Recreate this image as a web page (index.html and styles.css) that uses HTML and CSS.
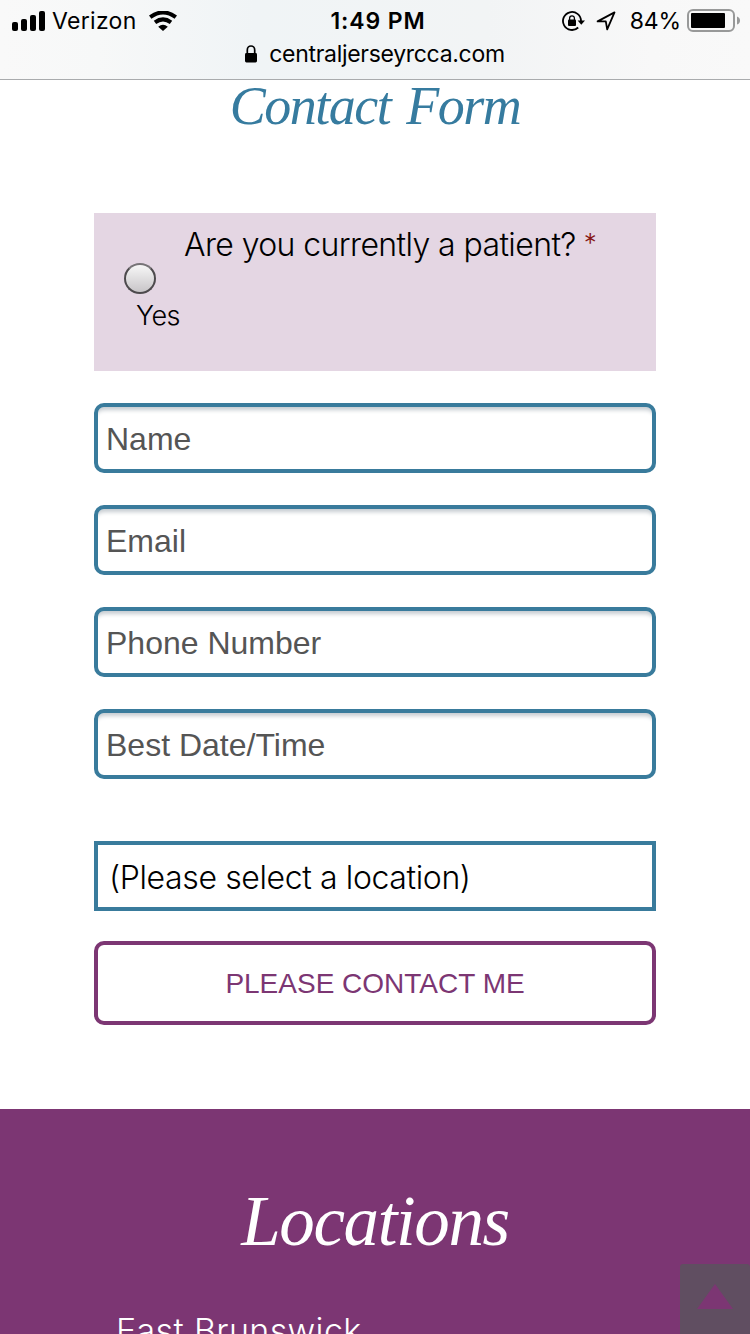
FILE: index.html
```html
<!DOCTYPE html>
<html lang="en">
<head>
<meta charset="utf-8">
<title>Contact Form</title>
<link rel="stylesheet" href="styles.css">
</head>
<body>
<div class="screen">
  <header class="chrome">
    <div class="status">
      <div class="status-left">
        <svg class="signal" width="34" height="20" viewBox="0 0 34 20"><rect x="0" y="11" width="6" height="9" rx="2"/><rect x="9" y="8" width="6" height="12" rx="2"/><rect x="18" y="4" width="6" height="16" rx="2"/><rect x="27" y="0" width="6" height="20" rx="2"/></svg>
        <span class="carrier">Verizon</span>
        <svg class="wifi" width="28" height="20" viewBox="0 0 28 20"><path d="M1.2 6.2Q14-3.4 26.8 6.2M6 11.4Q14 5.4 22 11.4" fill="none" stroke="#000" stroke-width="4"/><path d="M9.2 15.8Q14 11.8 18.8 15.8L14 20Z"/></svg>
      </div>
      <span class="time">1:49 PM</span>
      <div class="status-right">
        <svg class="rotation" width="23" height="20" viewBox="0 0 23 20"><path d="M16.2 16.5A9 9 0 1 1 19 10" fill="none" stroke="#000" stroke-width="1.8"/><path d="M15.6 9.5H23L19.3 13.7Z"/><rect x="6" y="8.5" width="8" height="6.5" rx="1"/><path d="M7.6 9.5V7.2a2.4 2.4 0 0 1 4.8 0V9.5" fill="none" stroke="#000" stroke-width="1.3"/></svg>
        <svg class="arrow" width="20" height="20" viewBox="0 0 20 20"><path d="M18.5 1.4L11.2 18.4L9.8 10.4H1.6L18.5 1.4Z" fill="none" stroke="#000" stroke-width="1.8" stroke-linejoin="round"/></svg>
        <span class="percent">84%</span>
        <svg class="battery" width="54" height="24" viewBox="0 0 54 24"><rect x="1" y="1" width="46" height="21" rx="5" fill="none" stroke="#989999" stroke-width="2"/><rect x="4" y="4" width="34" height="15" rx="1"/><path d="M50 7.5q3 1 3 4t-3 4z" fill="#989999"/></svg>
      </div>
    </div>
    <div class="address">
      <svg class="lock" width="12" height="18" viewBox="0 0 12 18"><rect x="0" y="8" width="12" height="9.5" rx="1.4"/><path d="M2.3 8.5V5a3.7 4 0 0 1 7.4 0v3.5" fill="none" stroke="#000" stroke-width="1.7"/></svg>
      <span class="domain">centraljerseyrcca.com</span>
    </div>
  </header>
  <main class="contact">
    <h1 class="title"><span class="title-text">Contact Form</span></h1>
    <form class="form">
      <div class="question">
        <p class="question-label"><span class="question-text">Are you currently a patient?</span><span class="required">*</span></p>
        <label class="choice"><span class="radio"></span><span class="choice-text">Yes</span></label>
      </div>
      <div class="field"><span>Name</span></div>
      <div class="field"><span>Email</span></div>
      <div class="field"><span>Phone Number</span></div>
      <div class="field"><span>Best Date/Time</span></div>
      <div class="select"><span class="select-text">(Please select a location)</span></div>
      <button class="submit" type="button"><span class="submit-text">PLEASE CONTACT ME</span></button>
    </form>
  </main>
  <section class="locations">
    <h2 class="locations-title"><span class="locations-text">Locations</span></h2>
    <p class="place"><span class="place-text">East Brunswick</span></p>
  </section>
  <a class="to-top"><svg width="36" height="26" viewBox="0 0 36 26"><path d="M18 0L36 25H0Z" fill="#7c3673"/></svg></a>
</div>
</body>
</html>
```
FILE: styles.css
```css
* { box-sizing: border-box; }
body { margin: 0; background: #fff; }
h1, h2, p { margin: 0; font-weight: 400; }
svg { display: block; flex: none; }
.screen { position: relative; width: 750px; height: 1334px; overflow: hidden; display: flex; flex-direction: column; font-family: Inter, "Liberation Sans", sans-serif; color: #000; }
.chrome { height: 80px; flex: none; border-bottom: 1px solid #a9abad; background: linear-gradient(90deg, #f9f9f9 0, #f7f8f8 13%, #f0f4f6 34%, #f2f4f5 65%, #f8f8f8 87%, #f9f9f9 100%); }
.status { height: 40px; display: grid; grid-template-columns: 1fr auto 1fr; align-items: center; padding: 0 12px; font-size: 23px; line-height: 42px; }
.status-left, .status-right { display: flex; align-items: center; }
.status-left svg { margin-top: -1px; }
.status-right { justify-content: flex-end; }
.carrier { margin-left: 6px; width: 98px; letter-spacing: .3px; white-space: nowrap; }
.wifi { margin-left: -1px; }
.time { font-weight: 600; font-size: 23px; letter-spacing: .9px; padding-left: 6px; }
.rotation { margin: -1px -1px 0 0; }
.arrow { margin-left: 12px; }
.percent { margin: 0 6px 0 14px; letter-spacing: -.1px; }
.battery { margin-right: -3px; }
.address { display: flex; height: 28px; justify-content: center; align-items: center; gap: 12px; font-size: 23px; line-height: 28px; }
.domain { letter-spacing: -.3px; }
.contact { flex: none; height: 1029px; padding: 0 94px; background: #fff; }
.title { height: 133px; line-height: 53px; font-family: "Liberation Serif", serif; font-style: italic; font-size: 54px; letter-spacing: -1.5px; word-spacing: 4px; color: #367b9f; text-align: center; white-space: nowrap; }
.form { display: flex; flex-direction: column; }
.question { height: 158px; margin-bottom: 32px; padding: 10px 30px; background: #e4d6e3; font-weight: 300; }
.question-label { height: 40px; display: flex; align-items: center; padding-left: 60px; gap: 8px; font-size: 32px; font-weight: 300; line-height: 42px; white-space: nowrap; }
.question-text { padding-top: 3px; letter-spacing: -.6px; }
.required { font-size: 26px; color: #861515; }
.choice { display: flex; flex-direction: column; }
.radio { width: 32px; height: 31px; border: 2px solid #4d4a4d; border-top-color: #777477; border-radius: 50%; background: linear-gradient(#f7f7f7, #c8c5c8); }
.choice-text { padding-left: 12px; margin-top: 5px; font-size: 27px; line-height: 34px; letter-spacing: -.5px; }
.field { height: 70px; margin-bottom: 32px; padding: 0 8px; border: 4px solid #397b9c; border-radius: 10px; box-shadow: inset 0 7px 4px -4px #c5cbd0; font-family: "Liberation Sans", sans-serif; font-size: 32px; line-height: 65px; color: #555; }
.select { height: 70px; margin: 30px 0; padding: 0 11px; border: 4px solid #397b9c; font-size: 32px; font-weight: 300; line-height: 65px; letter-spacing: -.38px; white-space: nowrap; }
.submit { height: 84px; padding: 0; border: 4px solid #7c3673; border-radius: 10px; background: #fff; color: #7c3673; font-family: "Liberation Sans", sans-serif; font-size: 28px; }
.submit-text { display: block; padding-top: 1px; }
.locations { flex: 1; min-height: 0; background: #7c3673; color: #fff; padding-top: 72px; }
.locations-title { height: 124px; line-height: 81px; font-family: "Liberation Serif", serif; font-style: italic; font-size: 71px; letter-spacing: -1.4px; text-align: center; }
.place { padding-left: 116px; font-size: 34px; line-height: 52px; font-weight: 300; letter-spacing: .35px; }
.to-top { position: absolute; left: 680px; top: 1264px; width: 70px; height: 70px; display: flex; justify-content: center; padding-top: 20px; background: #604e61; border-radius: 3px 3px 0 0; }
```
